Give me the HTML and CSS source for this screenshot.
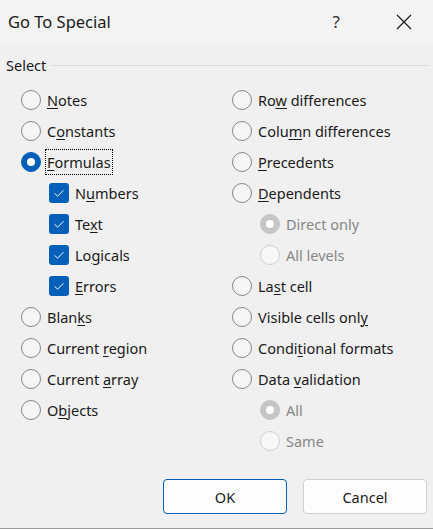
FILE: index.html
```html
<!DOCTYPE html>
<html>
  <head>
    <title>Go To Special</title>
    <link rel="stylesheet" href="styles.css">
  </head>
  <body>
    <div class="dialog">
      <div class="titlebar">
        <span class="title">Go To Special</span>
        <span class="help">?</span>
        <span class="close">
          <svg width="16" height="16" viewBox="0 0 16 16"><path d="M1 1 L15 15 M15 1 L1 15" stroke="#1a1a1a" stroke-width="1.2" fill="none"/></svg>
        </span>
      </div>

      <div class="group-head">
        <span>Select</span>
        <span class="rule"></span>
      </div>

      <div class="columns">
        <div class="col left">
          <div class="row"><span class="radio"></span><span><u>N</u>otes</span></div>
          <div class="row"><span class="radio"></span><span>C<u>o</u>nstants</span></div>
          <div class="row"><span class="radio on"></span><span class="focus"><u>F</u>ormulas</span></div>
          <div class="row sub"><span class="check"><svg width="20" height="20" viewBox="0 0 20 20"><path d="M5.5 10.2 L8.6 13.2 L14.5 7.2" stroke="#fff" stroke-width="1" fill="none"/></svg></span><span>N<u>u</u>mbers</span></div>
          <div class="row sub"><span class="check"><svg width="20" height="20" viewBox="0 0 20 20"><path d="M5.5 10.2 L8.6 13.2 L14.5 7.2" stroke="#fff" stroke-width="1" fill="none"/></svg></span><span>Te<u>x</u>t</span></div>
          <div class="row sub"><span class="check"><svg width="20" height="20" viewBox="0 0 20 20"><path d="M5.5 10.2 L8.6 13.2 L14.5 7.2" stroke="#fff" stroke-width="1" fill="none"/></svg></span><span>Lo<u>g</u>icals</span></div>
          <div class="row sub"><span class="check"><svg width="20" height="20" viewBox="0 0 20 20"><path d="M5.5 10.2 L8.6 13.2 L14.5 7.2" stroke="#fff" stroke-width="1" fill="none"/></svg></span><span><u>E</u>rrors</span></div>
          <div class="row"><span class="radio"></span><span>Blan<u>k</u>s</span></div>
          <div class="row"><span class="radio"></span><span>Current <u>r</u>egion</span></div>
          <div class="row"><span class="radio"></span><span>Current <u>a</u>rray</span></div>
          <div class="row"><span class="radio"></span><span>O<u>b</u>jects</span></div>
        </div>

        <div class="col right">
          <div class="row"><span class="radio"></span><span>Ro<u>w</u> differences</span></div>
          <div class="row"><span class="radio"></span><span>Colu<u>m</u>n differences</span></div>
          <div class="row"><span class="radio"></span><span><u>P</u>recedents</span></div>
          <div class="row"><span class="radio"></span><span><u>D</u>ependents</span></div>
          <div class="row sub disabled"><span class="radio on"></span><span>Direct only</span></div>
          <div class="row sub disabled"><span class="radio"></span><span>All levels</span></div>
          <div class="row"><span class="radio"></span><span>La<u>s</u>t cell</span></div>
          <div class="row"><span class="radio"></span><span>Visible cells onl<u>y</u></span></div>
          <div class="row"><span class="radio"></span><span>Condi<u>t</u>ional formats</span></div>
          <div class="row"><span class="radio"></span><span>Data <u>v</u>alidation</span></div>
          <div class="row sub disabled"><span class="radio on"></span><span>All</span></div>
          <div class="row sub disabled"><span class="radio"></span><span>Same</span></div>
        </div>
      </div>

      <div class="buttons">
        <button class="btn default">OK</button>
        <button class="btn">Cancel</button>
      </div>
    </div>
  </body>
</html>
```

FILE: styles.css
```css
body {
  margin: 0;
  padding: 0;
  font-family: "Noto Sans", "Open Sans", sans-serif;
  font-size: 14.5px;
  color: #1a1a1a;
  background-color: #f0f0f0;
}

.dialog {
  height: 528px;
  border-bottom: 1px solid #9a9a9a;
  background-color: #f0f0f0;
  overflow: hidden;
}

/* window caption */
.titlebar {
  height: 43px;
  display: flex;
  align-items: center;
  background-color: #f3f3f3;
}

.title {
  font-size: 16.5px;
  padding-left: 8px;
  flex: 1;
}

.help {
  font-size: 17px;
  color: #333;
  margin-right: 56px;
}

.close {
  display: flex;
  margin-right: 21px;
}

/* group box caption with line */
.group-head {
  display: flex;
  align-items: center;
  height: 24px;
  margin-top: 10px;
  padding-left: 6px;
  padding-right: 5px;
}

.group-head .rule {
  flex: 1;
  height: 1px;
  background-color: #d9d9d9;
  margin-left: 6px;
}

.columns {
  display: grid;
  grid-template-columns: 211px 1fr;
  padding-left: 21px;
  margin-top: 7px;
}

.row {
  height: 31px;
  display: flex;
  align-items: center;
  white-space: nowrap;
}

.row.sub {
  padding-left: 28px;
}

.row u {
  text-decoration-thickness: 1px;
  text-underline-offset: 2px;
}

.radio {
  width: 20px;
  height: 20px;
  box-sizing: border-box;
  border: 1px solid #868686;
  border-radius: 50%;
  background-color: #f5f5f5;
  margin-right: 6px;
  flex: none;
  display: flex;
  align-items: center;
  justify-content: center;
}

.radio.on {
  background-color: #005fb8;
  border-color: #005fb8;
}

.radio.on::after {
  content: "";
  width: 8px;
  height: 8px;
  border-radius: 50%;
  background-color: #fff;
}

.disabled {
  color: #878787;
}

.disabled .radio {
  border-color: #cfcfcf;
  background-color: #f7f7f7;
}

.disabled .radio.on {
  background-color: #c5c5c5;
  border-color: #c5c5c5;
}

.check {
  width: 20px;
  height: 20px;
  border-radius: 3px;
  background-color: #005fb8;
  margin-right: 6px;
  flex: none;
  display: flex;
}

.focus {
  outline: 1px dotted #000;
  padding: 0 1px;
  margin-left: -1px;
  line-height: 24px;
}

.buttons {
  display: flex;
  justify-content: flex-end;
  gap: 16px;
  padding-right: 6px;
  margin-top: 23px;
}

.btn {
  width: 124px;
  height: 35px;
  font-family: "Noto Sans", "Open Sans", sans-serif;
  font-size: 14.5px;
  color: #1a1a1a;
  background-color: #fdfdfd;
  border: 1px solid #d1d1d1;
  border-radius: 4px;
}

.btn.default {
  border-color: #005fb8;
}
```
